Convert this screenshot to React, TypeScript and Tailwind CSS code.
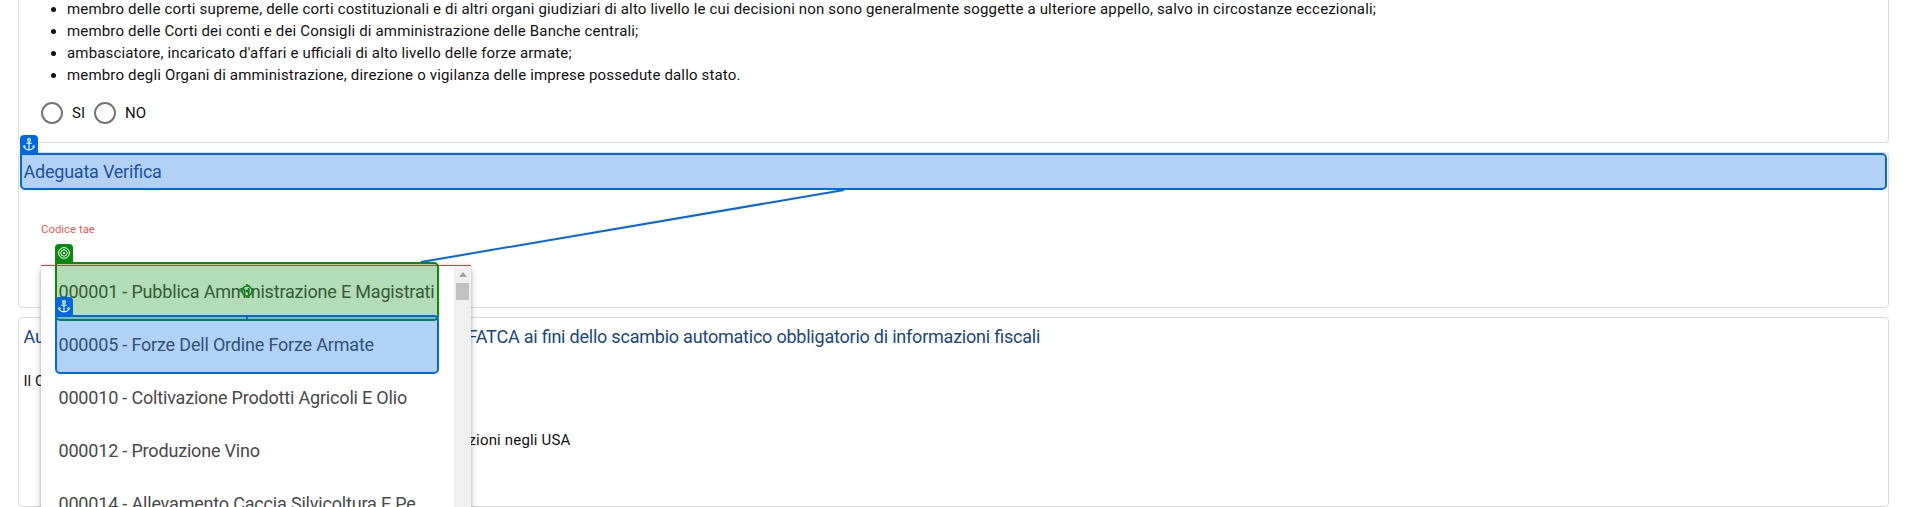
import type { ReactNode } from "react";

const offices = [
  "membro delle corti supreme, delle corti costituzionali e di altri organi giudiziari di alto livello le cui decisioni non sono generalmente soggette a ulteriore appello, salvo in circostanze eccezionali;",
  "membro delle Corti dei conti e dei Consigli di amministrazione delle Banche centrali;",
  "ambasciatore, incaricato d'affari e ufficiali di alto livello delle forze armate;",
  "membro degli Organi di amministrazione, direzione o vigilanza delle imprese possedute dallo stato.",
];

const codes = [
  "000001 - Pubblica Amministrazione E Magistrati",
  "000005 - Forze Dell Ordine Forze Armate",
  "000010 - Coltivazione Prodotti Agricoli E Olio",
  "000012 - Produzione Vino",
  "000014 - Allevamento Caccia Silvicoltura E Pe",
];

function AnchorIcon() {
  return (
    <svg width="12" height="13" viewBox="0 0 12 13" fill="none" stroke="#fff" strokeWidth="1.1">
      <circle cx="6" cy="2" r="1.4" />
      <path d="M6 3.4V12M3.2 5.2H8.8M1 8C1.2 10.4 3 11.7 6 12C9 11.7 10.8 10.4 11 8M0.5 9.4L1.1 7.8L2.6 8.8M11.5 9.4L10.9 7.8L9.4 8.8" />
    </svg>
  );
}

function TargetIcon() {
  return (
    <svg width="12" height="12" viewBox="0 0 12 12" fill="none" stroke="#fff">
      <circle cx="6" cy="6" r="5.4" />
      <circle cx="6" cy="6" r="3.2" />
      <circle cx="6" cy="6" r="1.1" fill="#fff" stroke="none" />
    </svg>
  );
}

function Radio({ label }: { label: string }) {
  return (
    <label className="flex items-center gap-[9px]">
      <span className="size-[22px] rounded-full border-2 border-[#757575]" />
      <span>{label}</span>
    </label>
  );
}

function Badge({ className, children }: { className: string; children: ReactNode }) {
  return (
    <span className={`absolute -left-[2px] -top-[20px] flex h-[18px] w-[18px] items-center justify-center rounded-t-[4px] ${className}`}>
      {children}
    </span>
  );
}

export default function App() {
  return (
    <div className="relative flex h-[507px] flex-col gap-[9px] overflow-hidden bg-white pl-[18px] pr-[18px] font-[Roboto,sans-serif] text-[15px] text-[#111] [font-feature-settings:'liga']">
      <section className="h-[143px] shrink-0 rounded-b-[4px] border border-t-0 border-[#dcdcdc] pl-[22px]">
        <ul className="-mt-[2px] list-disc pl-[26px] leading-[22px] tracking-[0.165px]">
          {offices.map((t) => (
            <li key={t} className="whitespace-nowrap">{t}</li>
          ))}
        </ul>
        <div className="mt-[16px] flex gap-[9px]">
          <Radio label="SI" />
          <Radio label="NO" />
        </div>
      </section>

      <section className="h-[156px] shrink-0 rounded-[4px] border border-[#dcdcdc]">
        <div className="relative ml-[1px] mr-px h-[37px] rounded-[5px] rounded-tl-none border-2 border-[#0068e0] bg-[#b3d1f5]">
          <Badge className="bg-[#0068e0]"><AnchorIcon /></Badge>
          <h2 className="pl-[1.5px] text-[18px] leading-[33px] tracking-[-0.22px] text-[#1c529c]">Adeguata Verifica</h2>
        </div>
        <div className="ml-[22px] mt-[31px] w-[430px]">
          <div className="text-[11.4px] leading-[16px] text-[#f4584e]">Codice tae</div>
          <div className="mt-[28px] h-px bg-[#e53935]" />
        </div>
      </section>

      <section className="h-[190px] shrink-0 rounded-[4px] border border-[#dcdcdc] px-[4.5px]">
        <h2 className="flex pt-[7px] text-[18px] leading-[24px] tracking-[-0.22px] text-[#164686]">
          <span className="w-[444px]">Au</span>
          <span>FATCA ai fini dello scambio automatico obbligatorio di informazioni fiscali</span>
        </h2>
        <p className="mt-[21px] leading-[22px]">Il C</p>
        <p className="mt-[37px] pl-[445px] leading-[22px] tracking-[0.168px]">zioni negli USA</p>
      </section>

      <div className="absolute left-[41px] top-[266px] flex h-[300px] w-[430px] bg-white shadow-[0_2px_4px_-1px_rgba(0,0,0,0.2),0_4px_5px_0_rgba(0,0,0,0.14),0_1px_10px_0_rgba(0,0,0,0.12)]">
        <ul className="flex-1 pl-[17.5px] text-[18px] tracking-[-0.185px] text-[#484848]">
          {codes.map((t) => (
            <li key={t} className="h-[53px] whitespace-nowrap leading-[52px]">{t}</li>
          ))}
        </ul>
        <div className="flex w-[17px] flex-col items-center bg-[#f0f0f0] pt-[6px]">
          <svg width="8" height="5" viewBox="0 0 8 5"><path d="M4 0L8 5H0Z" fill="#a3a3a3" /></svg>
          <div className="mt-[6px] h-[17px] w-[13px] bg-[#c1c1c1]" />
        </div>
      </div>
      <div className="absolute left-[41px] top-[265px] h-px w-[430px] bg-[#e53935]" />

      <div className="absolute left-[55px] top-[262px] h-[59px] w-[384px] rounded-[5px] rounded-tl-none border-2 border-[#078a0d] bg-[#078a0d]/30">
        <Badge className="bg-[#078a0d]"><TargetIcon /></Badge>
      </div>
      <svg className="absolute left-[240px] top-[284px]" width="14" height="14" viewBox="0 0 14 14" fill="none" stroke="#078a0d" strokeWidth="1.6">
        <circle cx="7" cy="7" r="5" />
        <path d="M7 0V2M7 12V14M0 7H2M12 7H14" />
        <circle cx="7" cy="7" r="1.5" fill="#078a0d" stroke="none" />
      </svg>
      <div className="absolute left-[55px] top-[315px] h-[59px] w-[384px] rounded-[5px] rounded-tl-none border-2 border-[#0068e0] bg-[#0068e0]/30">
        <Badge className="bg-[#0068e0]"><AnchorIcon /></Badge>
      </div>
      <svg className="pointer-events-none absolute left-0 top-0" width="1907" height="507" fill="none" stroke="#0068e0" strokeWidth="2">
        <path d="M421 262L844 190M247 315V319" />
      </svg>
    </div>
  );
}
